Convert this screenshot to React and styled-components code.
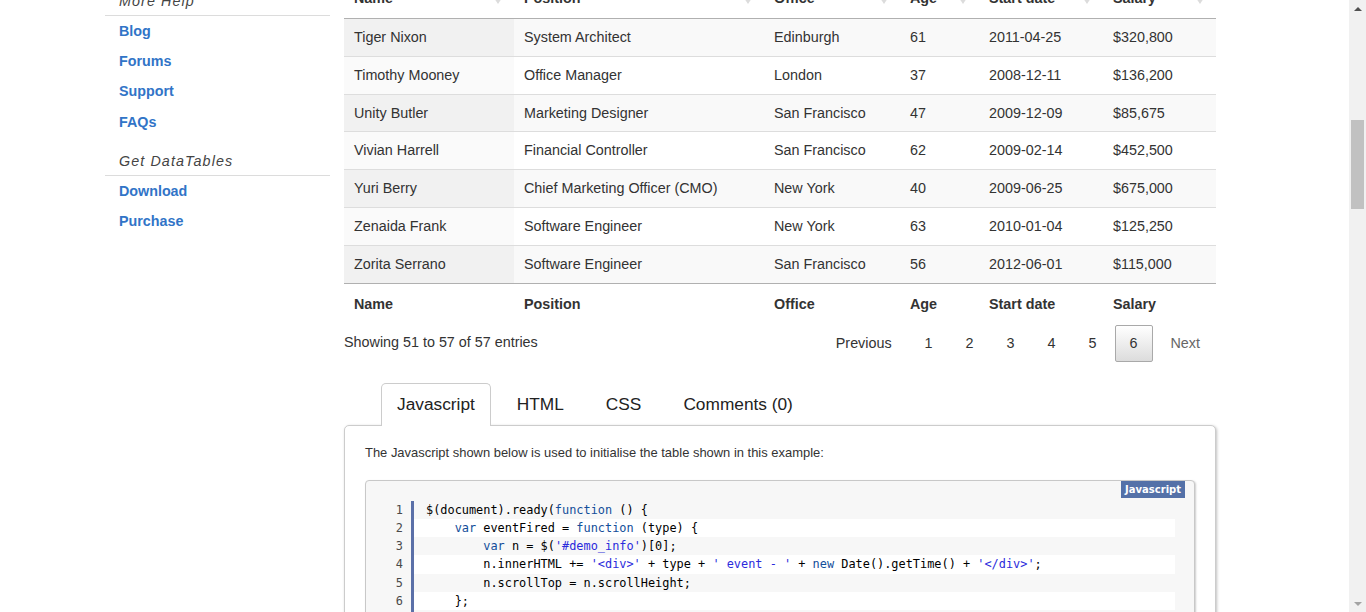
import React from "react";
import styled, { createGlobalStyle, css } from "styled-components";

const Global = createGlobalStyle`
  html, body { margin: 0; padding: 0; overflow: hidden; background: #fff; }
  body { font-family: "Liberation Sans", Arial, sans-serif; color: #333; }
  * { box-sizing: border-box; }
`;

const Shell = styled.div`
  display: flex;
  width: 1366px;
  height: 612px;
`;

const Viewport = styled.div`
  flex: 1;
  height: 612px;
  overflow: hidden;
`;

const Page = styled.div`
  display: flex;
  align-items: flex-start;
  gap: 14px;
  padding-left: 105px;
  margin-top: -22px;
`;

/* ---------- Sidebar ---------- */
const Sidebar = styled.nav`
  width: 225px;
  padding-top: 9px;
  display: flex;
  flex-direction: column;
`;

const SideHeading = styled.div`
  height: 29px;
  line-height: 28px;
  padding-left: 14px;
  font-size: 14.3px;
  font-style: italic;
  letter-spacing: 1.1px;
  color: #444;
  border-bottom: 1px solid #dcdcdc;
  margin-top: ${(p) => (p.$first ? "0" : "10.5px")};
`;

const SideList = styled.ul`
  list-style: none;
  margin: 0;
  padding: 0;
`;

const SideLink = styled.li`
  height: 30.2px;
  line-height: 30px;
  padding-left: 14px;
  font-size: 14.3px;
  font-weight: bold;
  color: #3174c7;
`;

/* ---------- Table ---------- */
const Main = styled.main`
  width: 872px;
  display: flex;
  flex-direction: column;
`;

const Table = styled.table`
  width: 872px;
  table-layout: fixed;
  border-collapse: separate;
  border-spacing: 0;
  font-size: 14.35px;
  color: #333;
`;

const HeadCell = styled.th`
  position: relative;
  text-align: left;
  font-weight: bold;
  padding: 10px 10px;
  line-height: 20px;
  border-bottom: 1px solid #b0b0b0;
  &::before,
  &::after {
    content: "";
    position: absolute;
    right: 12px;
    width: 0;
    height: 0;
    border-left: 4.5px solid transparent;
    border-right: 4.5px solid transparent;
  }
  &::before {
    top: 11px;
    border-bottom: 6px solid #e2e2e2;
  }
  &::after {
    top: 20px;
    border-top: 6px solid #dcdcdc;
  }
`;

const Cell = styled.td`
  padding: 8px 10px;
  line-height: 20.83px;
  white-space: nowrap;
  border-top: ${(p) => (p.$first ? "none" : "1px solid #dddddd")};
  background: ${(p) =>
    p.$odd ? (p.$sorted ? "#f1f1f1" : "#f9f9f9") : p.$sorted ? "#fafafa" : "#ffffff"};
`;

const FootCell = styled.th`
  text-align: left;
  font-weight: bold;
  padding: 10px 10px 6px;
  line-height: 20px;
  border-top: 1px solid #b0b0b0;
`;

const Controls = styled.div`
  display: flex;
  justify-content: space-between;
  align-items: flex-start;
  font-size: 14.35px;
`;

const Info = styled.div`
  padding-top: 12px;
  line-height: 20px;
  color: #333;
`;

const Pager = styled.div`
  display: flex;
  gap: 3px;
  padding-top: 5px;
  margin-right: 1px;
`;

const PageButton = styled.span`
  display: block;
  padding: 8px 14px;
  line-height: 19px;
  border: 1px solid transparent;
  border-radius: 2px;
  color: ${(p) => (p.$disabled ? "#666" : "#333")};
  ${(p) =>
    p.$current &&
    css`
      border-color: #a9a9a9;
      background: linear-gradient(to bottom, #ffffff 0%, #dcdcdc 100%);
    `}
`;

/* ---------- Tabs ---------- */
const Tabs = styled.div`
  margin-top: 21px;
  display: flex;
  flex-direction: column;
`;

const TabList = styled.div`
  display: flex;
  gap: 10px;
  padding-left: 37px;
`;

const Tab = styled.div`
  position: relative;
  z-index: 1;
  height: 43px;
  margin-bottom: -1px;
  padding: 0 15px;
  line-height: 41px;
  font-size: 17.3px;
  color: #222;
  border: 1px solid transparent;
  border-bottom: none;
  border-radius: 5px 5px 0 0;
  ${(p) =>
    p.$active &&
    css`
      border-color: #cccccc;
      background: #fff;
    `}
`;

const Panel = styled.div`
  border: 1px solid #cccccc;
  border-radius: 5px;
  box-shadow: 1px 1px 3px rgba(0, 0, 0, 0.25);
  padding: 18px 20px 20px;
  background: #fff;
`;

const PanelText = styled.p`
  margin: 0 0 18px;
  font-size: 12.95px;
  line-height: 18px;
  color: #333;
`;

const CodeBlock = styled.div`
  position: relative;
  border: 1px solid #c8c8c8;
  border-radius: 4px;
  box-shadow: 1px 1px 2px rgba(0, 0, 0, 0.2);
  background: #f7f7f7;
  padding: 19px 19px 19px 0;
`;

const CodeLabel = styled.span`
  position: absolute;
  top: 0;
  right: 9px;
  height: 17px;
  line-height: 17px;
  padding: 0 4px;
  background: #5471a8;
  color: #fff;
  font-family: "DejaVu Sans", "Liberation Sans", sans-serif;
  font-weight: bold;
  font-size: 10px;
`;

const CodeLine = styled.div`
  display: flex;
  font-family: "DejaVu Sans Mono", "Liberation Mono", monospace;
  font-size: 11.9px;
  line-height: 18.2px;
  padding-top: ${(p) => (p.$first ? "1px" : "0")};
`;

const LineNo = styled.span`
  width: 37px;
  flex: none;
  text-align: right;
  color: #4a4a4a;
  margin-right: 8px;
`;

const LineCode = styled.span`
  flex: 1;
  white-space: pre;
  color: #000;
  border-left: 3px solid #5b70a8;
  padding-left: 12px;
  background: ${(p) => (p.$even ? "#ffffff" : "transparent")};
`;

const Tok = styled.span`
  color: ${(p) => (p.$t === "k" ? "#134e9a" : p.$t === "s" ? "#2b2bdc" : "#000")};
`;

/* ---------- Scrollbar ---------- */
const Scrollbar = styled.div`
  width: 17px;
  height: 612px;
  background: #f1f1f1;
  display: flex;
  flex-direction: column;
  align-items: center;
`;

const ArrowBtn = styled.div`
  height: 17px;
  width: 17px;
  display: flex;
  align-items: center;
  justify-content: center;
`;

const Arrow = styled.span`
  width: 0;
  height: 0;
  border-left: 4px solid transparent;
  border-right: 4px solid transparent;
  ${(p) =>
    p.$down
      ? css`border-top: 4px solid #a3a3a3;`
      : css`border-bottom: 4px solid #505050;`}
`;

const Track = styled.div`
  flex: 1;
  width: 17px;
  display: flex;
  justify-content: center;
`;

const Thumb = styled.div`
  margin-top: 103px;
  width: 13px;
  height: 89px;
  background: #c1c1c1;
`;

/* ---------- Data ---------- */
const rows = [
  ["Tiger Nixon", "System Architect", "Edinburgh", "61", "2011-04-25", "$320,800"],
  ["Timothy Mooney", "Office Manager", "London", "37", "2008-12-11", "$136,200"],
  ["Unity Butler", "Marketing Designer", "San Francisco", "47", "2009-12-09", "$85,675"],
  ["Vivian Harrell", "Financial Controller", "San Francisco", "62", "2009-02-14", "$452,500"],
  ["Yuri Berry", "Chief Marketing Officer (CMO)", "New York", "40", "2009-06-25", "$675,000"],
  ["Zenaida Frank", "Software Engineer", "New York", "63", "2010-01-04", "$125,250"],
  ["Zorita Serrano", "Software Engineer", "San Francisco", "56", "2012-06-01", "$115,000"],
];

const columns = ["Name", "Position", "Office", "Age", "Start date", "Salary"];
const widths = [170, 250, 136, 79, 124, 113];

const code = [
  [["p", "$(document).ready("], ["k", "function"], ["p", " () {"]],
  [["p", "    "], ["k", "var"], ["p", " eventFired = "], ["k", "function"], ["p", " (type) {"]],
  [["p", "        "], ["k", "var"], ["p", " n = $("], ["s", "'#demo_info'"], ["p", ")[0];"]],
  [
    ["p", "        n.innerHTML += "],
    ["s", "'<div>'"],
    ["p", " + type + "],
    ["s", "' event - '"],
    ["p", " + "],
    ["k", "new"],
    ["p", " Date().getTime() + "],
    ["s", "'</div>'"],
    ["p", ";"],
  ],
  [["p", "        n.scrollTop = n.scrollHeight;"]],
  [["p", "    };"]],
  [["p", " "]],
  [["p", "    $("], ["s", "'#example'"], ["p", ")"]],
  [["p", "        .on("], ["s", "'order.dt'"], ["p", ", "], ["k", "function"], ["p", " () {"]],
];

export default function App() {
  return (
    <>
      <Global />
      <Shell>
        <Viewport>
          <Page>
            <Sidebar>
              <SideHeading $first>More Help</SideHeading>
              <SideList>
                <SideLink>Blog</SideLink>
                <SideLink>Forums</SideLink>
                <SideLink>Support</SideLink>
                <SideLink>FAQs</SideLink>
              </SideList>
              <SideHeading>Get DataTables</SideHeading>
              <SideList>
                <SideLink>Download</SideLink>
                <SideLink>Purchase</SideLink>
              </SideList>
            </Sidebar>

            <Main>
              <Table>
                <colgroup>
                  {widths.map((w, i) => (
                    <col key={i} style={{ width: w }} />
                  ))}
                </colgroup>
                <thead>
                  <tr>
                    {columns.map((c) => (
                      <HeadCell key={c}>{c}</HeadCell>
                    ))}
                  </tr>
                </thead>
                <tbody>
                  {rows.map((r, ri) => (
                    <tr key={ri}>
                      {r.map((v, ci) => (
                        <Cell key={ci} $first={ri === 0} $odd={ri % 2 === 0} $sorted={ci === 0}>
                          {v}
                        </Cell>
                      ))}
                    </tr>
                  ))}
                </tbody>
                <tfoot>
                  <tr>
                    {columns.map((c) => (
                      <FootCell key={c}>{c}</FootCell>
                    ))}
                  </tr>
                </tfoot>
              </Table>

              <Controls>
                <Info>Showing 51 to 57 of 57 entries</Info>
                <Pager>
                  <PageButton>Previous</PageButton>
                  {["1", "2", "3", "4", "5"].map((n) => (
                    <PageButton key={n}>{n}</PageButton>
                  ))}
                  <PageButton $current>6</PageButton>
                  <PageButton $disabled>Next</PageButton>
                </Pager>
              </Controls>

              <Tabs>
                <TabList>
                  <Tab $active>Javascript</Tab>
                  <Tab>HTML</Tab>
                  <Tab>CSS</Tab>
                  <Tab>Comments (0)</Tab>
                </TabList>
                <Panel>
                  <PanelText>
                    The Javascript shown below is used to initialise the table shown in this example:
                  </PanelText>
                  <CodeBlock>
                    <CodeLabel>Javascript</CodeLabel>
                    {code.map((line, i) => (
                      <CodeLine key={i} $first={i === 0}>
                        <LineNo>{i + 1}</LineNo>
                        <LineCode $even={i % 2 === 1}>
                          {line.map(([t, s], j) => (
                            <Tok key={j} $t={t}>
                              {s}
                            </Tok>
                          ))}
                        </LineCode>
                      </CodeLine>
                    ))}
                  </CodeBlock>
                </Panel>
              </Tabs>
            </Main>
          </Page>
        </Viewport>
        <Scrollbar>
          <ArrowBtn>
            <Arrow />
          </ArrowBtn>
          <Track>
            <Thumb />
          </Track>
          <ArrowBtn>
            <Arrow $down />
          </ArrowBtn>
        </Scrollbar>
      </Shell>
    </>
  );
}
